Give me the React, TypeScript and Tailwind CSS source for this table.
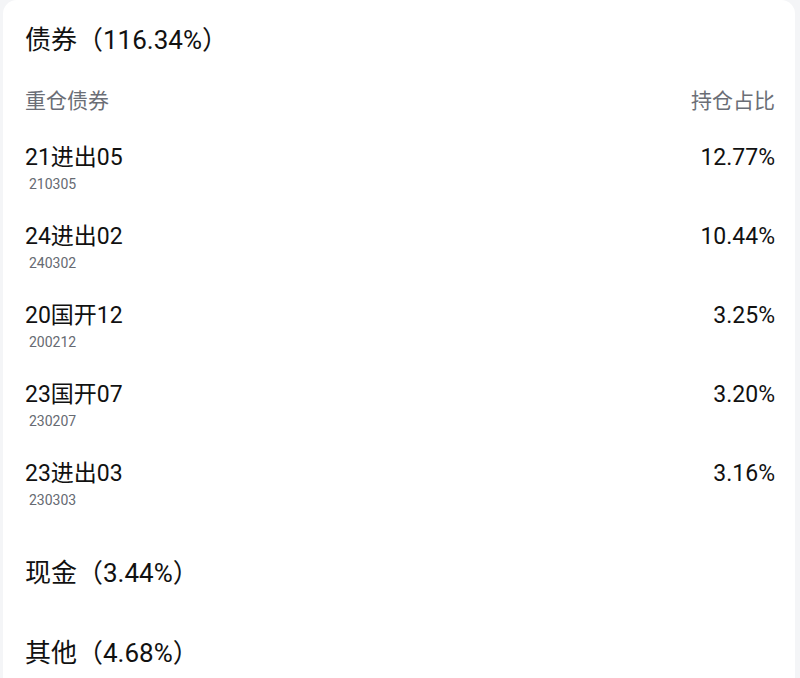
const bonds = [
  { name: "21进出05", code: "210305", pct: "12.77%" },
  { name: "24进出02", code: "240302", pct: "10.44%" },
  { name: "20国开12", code: "200212", pct: "3.25%" },
  { name: "23国开07", code: "230207", pct: "3.20%" },
  { name: "23进出03", code: "230303", pct: "3.16%" },
];

const font = { fontFamily: 'Roboto, "Noto Sans CJK SC", sans-serif' };

export default function App() {
  return (
    <div className="w-[800px] h-[678px] overflow-hidden bg-[#f4f5f7] pl-[3px] pr-[5px]" style={font}>
      <div className="h-full bg-white rounded-t-[14px] pl-[22px] pr-[20px]">
        <h2 className="pt-[20px] text-[26px] leading-[40px] text-[#111]">债券（116.34%）</h2>
        <div className="mt-[27px] flex justify-between text-[21px] leading-[28px] text-[#6b6e76]">
          <span>重仓债券</span>
          <span>持仓占比</span>
        </div>
        <div className="mt-[28px] flex flex-col gap-[27px]">
          {bonds.map((b) => (
            <div key={b.code} className="flex justify-between">
              <div>
                <div className="text-[23px] leading-[30px] text-[#111]">{b.name}</div>
                <div className="pl-[4px] text-[14px] leading-[22px] text-[#666a72]">{b.code}</div>
              </div>
              <div className="text-[23px] leading-[30px] text-[#111]">{b.pct}</div>
            </div>
          ))}
        </div>
        <h3 className="mt-[42px] text-[26px] leading-[40px] text-[#111]">现金（3.44%）</h3>
        <h3 className="mt-[40px] text-[26px] leading-[40px] text-[#111]">其他（4.68%）</h3>
      </div>
    </div>
  );
}
